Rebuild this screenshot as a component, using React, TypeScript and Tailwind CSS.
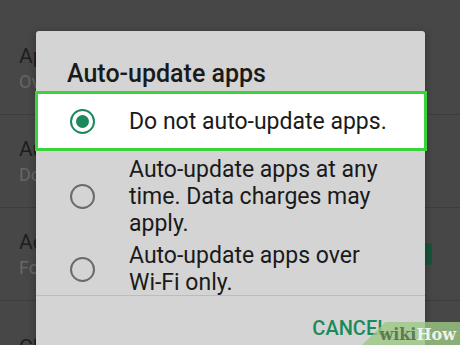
import * as React from "react";

const rows = [
  { title: "App download preference", sub: "Over any network", check: false },
  { title: "Auto-update apps", sub: "Do not auto-update apps", check: false },
  { title: "Add icon to Home screen", sub: "For new apps", check: true },
  { title: "Clear local search history", sub: "", check: false },
];

const options = [
  { id: "never", label: "Do not auto-update apps." },
  { id: "any", label: "Auto-update apps at any time. Data charges may apply." },
  { id: "wifi", label: "Auto-update apps over Wi-Fi only." },
];

const Radio = ({ checked }: { checked: boolean }) =>
  checked ? (
    <span className="flex h-[25px] w-[25px] shrink-0 items-center justify-center rounded-full border-[2.5px] border-[#1b8a5a]">
      <span className="h-[13px] w-[13px] rounded-full bg-[#1b8a5a]" />
    </span>
  ) : (
    <span className="h-[25px] w-[25px] shrink-0 rounded-full border-2 border-[#6a6a6a]" />
  );

export default function App() {
  return (
    <div className="relative h-[345px] w-[460px] overflow-hidden bg-[#474747] font-['Roboto',sans-serif]">
      {/* underlying settings list */}
      <div className="flex flex-col pt-[22px]">
        {rows.map((row) => (
          <div
            key={row.title}
            className="flex h-[93px] items-center justify-between border-b border-[#3d3d3d] pl-[19px] pr-[28px]"
          >
            <div className="flex flex-col">
              <span className="whitespace-nowrap text-[21px] leading-[28px] text-[#1e1e1e]">{row.title}</span>
              {row.sub && (
                <span className="whitespace-nowrap text-[18px] leading-[24px] text-[#666666]">{row.sub}</span>
              )}
            </div>
            {row.check && (
              <span className="flex h-[22px] w-[22px] items-center justify-center rounded-[2px] bg-[#17543a] text-[12px] text-[#4a8a6a]">
                ✓
              </span>
            )}
          </div>
        ))}
      </div>

      {/* dialog */}
      <div className="absolute left-[36px] top-[31px] flex h-[330px] w-[389px] flex-col rounded-[3px] bg-[#d4d4d4] shadow-[0_2px_8px_rgba(0,0,0,0.3)]">
        <h2 className="pl-[31px] pt-[28px] text-[25px] font-medium leading-[30px] text-[#1a1a1a]">
          Auto-update apps
        </h2>

        <div className="mt-[2px] flex flex-col">
          {options.map((opt, i) => {
            const selected = i === 0;
            return (
              <div
                key={opt.id}
                className={
                  selected
                    ? "-ml-px -mr-[2px] mb-[5px] flex h-[60px] items-center border-[3px] border-[#3bd23b] bg-white pl-[32px]"
                    : i === 1
                    ? "mb-[5px] flex items-center pl-[34px]"
                    : "flex items-center pl-[34px]"
                }
              >
                <Radio checked={selected} />
                <span className="ml-[34px] w-[268px] text-[23px] leading-[27px] text-[#1a1a1a]">{opt.label}</span>
              </div>
            );
          })}
        </div>

        <div className="-mt-[1px] h-px bg-[#bcbcbc]" />

        <div className="flex justify-end pr-[37px] pt-[20px]">
          <span className="text-[20px] font-medium leading-[24px] text-[#1b8a5a]">CANCEL</span>
        </div>
      </div>

      {/* watermark */}
      <div className="absolute bottom-0 right-0 flex h-[23px] w-[98px] items-end justify-end bg-[#9cc784]/80 pb-[2px] pr-[4px] [clip-path:polygon(24%_0,100%_0,100%_100%,0_100%)]">
        <span className="font-['DejaVu_Serif',serif] text-[16px] font-bold leading-none text-[#5d7a52]">wiki</span>
        <span className="font-['DejaVu_Serif',serif] text-[16px] font-bold leading-none text-[#eef4ea]">How</span>
      </div>
    </div>
  );
}
